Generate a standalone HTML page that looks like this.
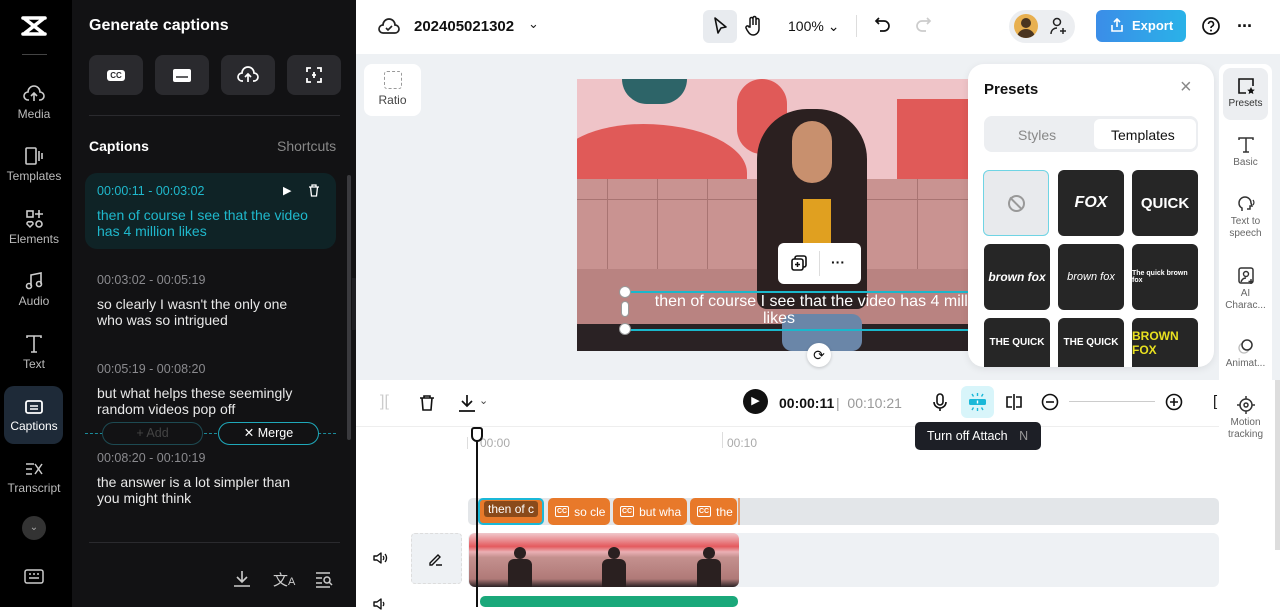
<!DOCTYPE html>
<html><head><meta charset="utf-8"><style>
*{box-sizing:border-box;margin:0;padding:0}
body{width:1280px;height:607px;overflow:hidden;position:relative;font-family:"Liberation Sans",sans-serif;background:#fff}
.a{position:absolute}
.nav{left:0;top:0;width:72px;height:607px;background:#000;color:#bbb;font-size:12px;text-align:center}
.nav .it{position:absolute;left:0;width:68px;text-align:center}
.nav svg{display:block;margin:0 auto 3px}
.panel{left:72px;top:0;width:284px;height:607px;background:#121214;color:#fff}
.gbtn{position:absolute;top:55px;width:54px;height:40px;background:#2a2a2e;border-radius:8px;display:flex;align-items:center;justify-content:center}
.cap{position:absolute;left:25px;font-size:14px;line-height:16px;color:#e8e8e8}
.cap .t{font-size:12.5px;color:#8a8a8e;margin-bottom:8px}
.tb{left:356px;top:0;width:924px;height:54px;background:#fff}
.ws{left:356px;top:54px;width:924px;height:326px;background:#eef1f4}
.tile{position:absolute;width:66px;height:66px;background:#262626;border-radius:6px;color:#fff;display:flex;align-items:center;justify-content:center;font-weight:bold}
.rs{left:1219px;top:64px;width:53px;height:392px;background:#fff;border-radius:8px;font-size:10px;color:#666;text-align:center}
.rs .i{position:absolute;left:0;width:53px}
.rs svg{display:block;margin:0 auto 2px}
.clip{position:absolute;top:498px;height:27px;background:#e8792a;border-radius:5px;color:#fff;font-size:12px;display:flex;align-items:center;padding-left:7px;overflow:hidden;white-space:nowrap}
.cc{display:inline-block;border:1.5px solid #fff;border-radius:2px;font-size:7px;padding:0 1px;margin-right:5px;line-height:9px;font-weight:bold}
.fig{position:absolute;top:8px;width:30px;height:46px}
</style></head><body>
<div class="a nav">
 <svg class="a" style="left:19px;top:14px" width="30" height="24" viewBox="0 0 30 24"><path d="M4 4h22M4 20h22M6 5l18 14M24 5L6 19" stroke="#fff" stroke-width="3.6" fill="none" stroke-linecap="round"/></svg>
 <div class="a" style="left:22px;top:54px;width:25px;height:1px;background:#444"></div>
 <div class="it" style="top:84px"><svg width="22" height="20" viewBox="0 0 22 20"><path d="M6 16H5a4 4 0 0 1 0-8 6 6 0 0 1 12 0 4 4 0 0 1 0 8h-1M11 17v-7M8 12l3-3 3 3" stroke="#ccc" stroke-width="1.6" fill="none"/></svg>Media</div>
 <div class="it" style="top:146px"><svg width="22" height="20" viewBox="0 0 22 20"><rect x="3" y="2" width="10" height="16" rx="1" stroke="#ccc" stroke-width="1.6" fill="none"/><path d="M16 5v10M19 7v6" stroke="#ccc" stroke-width="1.6"/></svg>Templates</div>
 <div class="it" style="top:209px"><svg width="22" height="20" viewBox="0 0 22 20"><rect x="4" y="2" width="6" height="6" stroke="#ccc" stroke-width="1.6" fill="none"/><path d="M16 1v8M12 5h8" stroke="#ccc" stroke-width="1.6"/><circle cx="16" cy="15" r="3" stroke="#ccc" stroke-width="1.6" fill="none"/><path d="M7 18l-3-3a2 2 0 0 1 3-2 2 2 0 0 1 3 2z" stroke="#ccc" stroke-width="1.5" fill="none"/></svg>Elements</div>
 <div class="it" style="top:271px"><svg width="22" height="20" viewBox="0 0 22 20"><path d="M8 15V4l10-2v11" stroke="#ccc" stroke-width="1.6" fill="none"/><circle cx="6" cy="15" r="2.5" stroke="#ccc" stroke-width="1.6" fill="none"/><circle cx="16" cy="13" r="2.5" stroke="#ccc" stroke-width="1.6" fill="none"/></svg>Audio</div>
 <div class="it" style="top:334px"><svg width="22" height="20" viewBox="0 0 22 20"><path d="M4 4V2h14v2M11 2v16M8 18h6" stroke="#ccc" stroke-width="1.6" fill="none"/></svg>Text</div>
 <div class="a" style="left:4px;top:386px;width:59px;height:58px;background:#1e2a38;border-radius:10px"></div>
 <div class="it" style="top:398px;color:#fff"><svg width="22" height="18" viewBox="0 0 22 18"><rect x="3" y="3" width="16" height="12" rx="2" stroke="#fff" stroke-width="1.8" fill="none"/><path d="M7 8h8M7 11h8" stroke="#fff" stroke-width="1.6"/></svg>Captions</div>
 <div class="it" style="top:460px"><svg width="22" height="18" viewBox="0 0 22 18"><path d="M3 4h8M3 9h6M3 14h6M12 4l7 10M19 4l-7 10" stroke="#ccc" stroke-width="1.5"/></svg>Transcript</div>
 <div class="a" style="left:22px;top:516px;width:24px;height:24px;border-radius:50%;background:#333;color:#aaa;font-size:10px;line-height:24px">⌄</div>
 <svg class="a" style="left:23px;top:568px" width="22" height="17" viewBox="0 0 22 17"><rect x="2" y="2" width="18" height="13" rx="2" stroke="#ccc" stroke-width="1.5" fill="none"/><path d="M6 6h2M10 6h2M14 6h2M6 10h10" stroke="#ccc" stroke-width="1.5"/></svg>
</div>
<div class="a panel">
 <div class="a" style="left:17px;top:17px;font-size:16px;font-weight:bold">Generate captions</div>
 <div class="gbtn" style="left:17px"><div style="background:#fff;color:#2a2a2e;font-size:8px;font-weight:bold;border-radius:3px;padding:1px 3px">CC</div></div>
 <div class="gbtn" style="left:83px"><svg width="18" height="13" viewBox="0 0 18 13"><rect x="0" y="0" width="18" height="13" rx="2" fill="#fff"/><path d="M3 8h12" stroke="#2a2a2e" stroke-width="1.5"/></svg></div>
 <div class="gbtn" style="left:149px"><svg width="22" height="18" viewBox="0 0 22 18"><path d="M6 15H5a4 4 0 0 1 0-8 6 6 0 0 1 12 0 4 4 0 0 1 0 8h-1M11 16V9M8 11l3-3 3 3" stroke="#fff" stroke-width="1.7" fill="none"/></svg></div>
 <div class="gbtn" style="left:215px"><svg width="18" height="18" viewBox="0 0 18 18"><path d="M2 6V2h4M12 2h4v4M2 12v4h4M16 12v4h-4M7 9h4M9 6v6" stroke="#fff" stroke-width="1.8" fill="none"/></svg></div>
 <div class="a" style="left:17px;top:115px;width:251px;height:1px;background:#2a2a2e"></div>
 <div class="a" style="left:17px;top:138px;font-size:14px;font-weight:bold">Captions</div>
 <div class="a" style="left:205px;top:138px;font-size:14px;color:#888">Shortcuts</div>
 <div class="a" style="left:13px;top:173px;width:251px;height:76px;background:#0f2326;border-radius:12px"></div>
 <div class="cap" style="top:183px;color:#1fb8cc"><div class="t" style="color:#1fb8cc">00:00:11 - 00:03:02</div>then of course I see that the video<br>has 4 million likes</div>
 <div class="a" style="left:211px;top:184px;color:#fff;font-size:11px">▶</div>
 <svg class="a" style="left:236px;top:184px" width="12" height="13" viewBox="0 0 12 13"><path d="M1 3h10M4 3V1h4v2M2.5 3l1 9h5l1-9" stroke="#fff" stroke-width="1.3" fill="none"/></svg>
 <div class="cap" style="top:272px"><div class="t">00:03:02 - 00:05:19</div>so clearly I wasn't the only one<br>who was so intrigued</div>
 <div class="cap" style="top:361px"><div class="t">00:05:19 - 00:08:20</div>but what helps these seemingly<br>random videos pop off</div>
 <div class="a" style="left:13px;top:433px;width:251px;border-top:1px dashed #1a8a9a"></div>
 <div class="a" style="left:30px;top:422px;width:101px;height:23px;border:1px solid #1d4a52;border-radius:12px;background:#121214;color:#444;font-size:12.5px;text-align:center;line-height:21px">+ Add</div>
 <div class="a" style="left:146px;top:422px;width:101px;height:23px;border:1px solid #1fa8ba;border-radius:12px;background:#121214;color:#fff;font-size:12.5px;text-align:center;line-height:21px">✕ Merge</div>
 <div class="cap" style="top:450px"><div class="t">00:08:20 - 00:10:19</div>the answer is a lot simpler than<br>you might think</div>
 <div class="a" style="left:17px;top:542px;width:251px;height:1px;background:#2a2a2e"></div>
 <svg class="a" style="left:160px;top:570px" width="20" height="18" viewBox="0 0 20 18"><path d="M10 1v11M5 7l5 5 5-5M2 16h16" stroke="#ccc" stroke-width="1.6" fill="none"/></svg>
 <div class="a" style="left:201px;top:569px;color:#ccc;font-size:15px">文<span style="font-size:11px">A</span></div>
 <svg class="a" style="left:242px;top:570px" width="20" height="18" viewBox="0 0 20 18"><path d="M2 3h14M2 8h6M2 13h6M2 17h14" stroke="#ccc" stroke-width="1.5"/><circle cx="13" cy="10" r="3" stroke="#ccc" stroke-width="1.5" fill="none"/><path d="M15 12l3 3" stroke="#ccc" stroke-width="1.5"/></svg>
 <div class="a" style="left:275px;top:175px;width:4px;height:265px;background:#3a3a3e;border-radius:2px"></div>
 <div class="a" style="left:280px;top:278px;width:8px;height:52px;background:#1e1e22;border-radius:0 6px 6px 0"></div>
</div>
<div class="a tb">
 <svg class="a" style="left:22px;top:17px" width="22" height="20" viewBox="0 0 22 20"><path d="M6 16H5a4 4 0 0 1 0-8 6 6 0 0 1 12 0 4 4 0 0 1 0 8H6z" stroke="#222" stroke-width="1.7" fill="none"/><path d="M8 11l2 2 4-4" stroke="#222" stroke-width="1.6" fill="none"/></svg>
 <div class="a" style="left:58px;top:18px;font-size:15px;font-weight:bold;color:#111">202405021302</div>
 <div class="a" style="left:172px;top:16px;font-size:13px;color:#222">⌄</div>
 <div class="a" style="left:347px;top:10px;width:34px;height:33px;background:#e8ebef;border-radius:6px"></div>
 <svg class="a" style="left:356px;top:16px" width="16" height="20" viewBox="0 0 16 20"><path d="M3 2l11 9-5 1-3 5z" stroke="#111" stroke-width="1.6" fill="none" stroke-linejoin="round"/></svg>
 <svg class="a" style="left:389px;top:15px" width="18" height="22" viewBox="0 0 18 22"><path d="M5 12V4a1.5 1.5 0 0 1 3 0v6V3a1.5 1.5 0 0 1 3 0v7V5a1.5 1.5 0 0 1 3 0v9a6 6 0 0 1-6 6c-3 0-4-2-6-5l-1-2a1.5 1.5 0 0 1 3-1z" stroke="#111" stroke-width="1.5" fill="none"/></svg>
 <div class="a" style="left:432px;top:18px;font-size:14px;color:#111">100% ⌄</div>
 <div class="a" style="left:500px;top:15px;width:1px;height:22px;background:#ddd"></div>
 <svg class="a" style="left:518px;top:16px" width="18" height="20" viewBox="0 0 18 20"><path d="M5 2L2 5l3 3M2 5h8a5 5 0 0 1 0 10H6" stroke="#111" stroke-width="1.7" fill="none"/></svg>
 <svg class="a" style="left:558px;top:16px" width="18" height="20" viewBox="0 0 18 20"><path d="M13 2l3 3-3 3M16 5H8a5 5 0 0 0 0 10h4" stroke="#ccc" stroke-width="1.7" fill="none"/></svg>
 <div class="a" style="left:653px;top:10px;width:66px;height:33px;background:#eceef1;border-radius:17px"></div>
 <div class="a" style="left:658px;top:14px;width:24px;height:24px;border-radius:50%;background:#e8b050;overflow:hidden"><div style="width:10px;height:10px;border-radius:50%;background:#4a3520;margin:4px auto 0"></div><div style="width:18px;height:10px;border-radius:9px 9px 0 0;background:#4a3520;margin:1px auto"></div></div>
 <svg class="a" style="left:694px;top:17px" width="18" height="18" viewBox="0 0 18 18"><circle cx="7" cy="5" r="3.5" stroke="#222" stroke-width="1.5" fill="none"/><path d="M1 17c0-4 3-6 6-6M13 11v6M10 14h6" stroke="#222" stroke-width="1.5" fill="none"/></svg>
 <div class="a" style="left:740px;top:10px;width:90px;height:32px;background:linear-gradient(90deg,#3b8de8,#2ab2e8);border-radius:6px;color:#fff;font-size:13px;font-weight:bold;line-height:32px;padding-left:36px">Export</div>
 <svg class="a" style="left:754px;top:18px" width="14" height="15" viewBox="0 0 14 15"><path d="M7 1v8M4 4l3-3 3 3M2 7v6h10V7" stroke="#fff" stroke-width="1.6" fill="none"/></svg>
 <svg class="a" style="left:845px;top:16px" width="20" height="20" viewBox="0 0 20 20"><circle cx="10" cy="10" r="8" stroke="#111" stroke-width="1.7" fill="none"/><path d="M7.5 8a2.5 2.5 0 1 1 3.5 2.3c-.7.3-1 .9-1 1.7" stroke="#111" stroke-width="1.6" fill="none"/><circle cx="10" cy="14.5" r="1" fill="#111"/></svg>
 <div class="a" style="left:881px;top:16px;font-size:18px;color:#111;font-weight:bold;letter-spacing:-1px">···</div>
</div>
<div class="a ws">
 <div class="a" style="left:8px;top:10px;width:57px;height:52px;background:#fff;border-radius:8px;text-align:center;font-size:12px;color:#444;padding-top:7px"><div style="width:18px;height:18px;border:1.5px dashed #999;border-radius:3px;margin:0 auto 4px"></div>Ratio</div>
 <div class="a" style="left:221px;top:25px;width:391px;height:272px;overflow:hidden;background:#e8a8b0">
  <div class="a" style="left:0;top:0;width:391px;height:120px;background:#efc4c8"></div>
  <div class="a" style="left:45px;top:0;width:65px;height:25px;background:#2d6468;border-radius:0 0 40px 40px"></div>
  <div class="a" style="left:-20px;top:45px;width:190px;height:90px;background:#e05a58;border-radius:50% 60% 0 0"></div>
  <div class="a" style="left:160px;top:0;width:50px;height:75px;background:#e05a58;border-radius:25px"></div>
  <div class="a" style="left:320px;top:20px;width:71px;height:110px;background:#e05a58"></div>
  <div class="a" style="left:0;top:100px;width:391px;height:150px;background:#c99391"></div>
  <div class="a" style="left:0;top:120px;width:391px;height:1px;background:#a87472"></div>
  <div class="a" style="left:30px;top:100px;width:1px;height:90px;background:#a87472"></div>
  <div class="a" style="left:80px;top:100px;width:1px;height:90px;background:#a87472"></div>
  <div class="a" style="left:130px;top:100px;width:1px;height:90px;background:#a87472"></div>
  <div class="a" style="left:340px;top:100px;width:1px;height:90px;background:#a87472"></div>
  <div class="a" style="left:0;top:190px;width:391px;height:55px;background:#b98381"></div>
  <div class="a" style="left:0;top:245px;width:391px;height:27px;background:#2a2224"></div>
  <div class="a" style="left:180px;top:30px;width:110px;height:200px;background:#2b2020;border-radius:50px 50px 10px 10px"></div>
  <div class="a" style="left:215px;top:42px;width:40px;height:62px;background:#c8906e;border-radius:20px"></div>
  <div class="a" style="left:226px;top:120px;width:28px;height:50px;background:#e0a020"></div>
  <div class="a" style="left:205px;top:235px;width:80px;height:37px;background:#6a86a8;border-radius:10px"></div>
  <div class="a" style="left:48px;top:212px;width:343px;height:2px;background:#1ab8cc"></div>
  <div class="a" style="left:48px;top:250px;width:343px;height:2px;background:#1ab8cc"></div>
  <div class="a" style="left:45px;top:214px;width:400px;color:#fff;font-size:16px;text-align:center;line-height:17px;white-space:nowrap">then of course I see that the video has 4 million<br><span style="margin-left:-86px">likes</span></div>
  <div class="a" style="left:42px;top:207px;width:12px;height:12px;border-radius:50%;background:#fff;border:1px solid #999"></div>
  <div class="a" style="left:42px;top:244px;width:12px;height:12px;border-radius:50%;background:#fff;border:1px solid #999"></div>
  <div class="a" style="left:44px;top:222px;width:8px;height:16px;border-radius:4px;background:#fff;border:1px solid #999"></div>
  <div class="a" style="left:201px;top:164px;width:83px;height:41px;background:#fff;border-radius:6px"></div>
  <div class="a" style="left:242px;top:172px;width:1px;height:25px;background:#ddd"></div>
  <svg class="a" style="left:213px;top:175px" width="18" height="18" viewBox="0 0 18 18"><rect x="5" y="2" width="11" height="11" rx="2" stroke="#111" stroke-width="1.6" fill="none"/><rect x="2" y="5" width="11" height="11" rx="2" stroke="#111" stroke-width="1.6" fill="#fff"/><path d="M7.5 8v5M5 10.5h5" stroke="#111" stroke-width="1.5"/></svg>
  <div class="a" style="left:254px;top:175px;font-size:14px;font-weight:bold;color:#111">···</div>
 </div>
 <div class="a" style="left:451px;top:289px;width:24px;height:24px;border-radius:50%;background:#fff;box-shadow:0 1px 3px rgba(0,0,0,.2);text-align:center;font-size:14px;line-height:24px;color:#111">⟳</div>
 <div class="a" style="left:612px;top:10px;width:246px;height:303px;background:#fff;border-radius:16px;box-shadow:0 2px 8px rgba(0,0,0,.08)">
  <div class="a" style="left:16px;top:17px;font-size:15px;font-weight:bold;color:#111">Presets</div>
  <div class="a" style="left:212px;top:12px;font-size:20px;color:#888">×</div>
  <div class="a" style="left:16px;top:52px;width:214px;height:36px;background:#eceef1;border-radius:8px"></div>
  <div class="a" style="left:126px;top:55px;width:102px;height:30px;background:#fff;border-radius:6px"></div>
  <div class="a" style="left:50px;top:63px;font-size:14px;color:#888">Styles</div>
  <div class="a" style="left:143px;top:63px;font-size:14px;color:#111">Templates</div>
  <div class="tile" style="left:15px;top:106px;background:#e8eaed;border:1.5px solid #6fd4e4"><div style="width:17px;height:17px;border:2px solid #999;border-radius:50%;position:relative"><div style="position:absolute;left:5px;top:-2px;width:2px;height:17px;background:#999;transform:rotate(-45deg)"></div></div></div>
  <div class="tile" style="left:90px;top:106px;font-style:italic;font-size:16px">FOX</div>
  <div class="tile" style="left:164px;top:106px;font-size:15px">QUICK</div>
  <div class="tile" style="left:16px;top:180px;font-style:italic;font-size:12px">brown fox</div>
  <div class="tile" style="left:90px;top:180px;font-size:11px;font-weight:normal;font-style:italic">brown fox</div>
  <div class="tile" style="left:164px;top:180px;font-size:7px">The quick brown fox</div>
  <div class="tile" style="left:16px;top:254px;font-size:10px;height:49px;border-radius:6px 6px 0 0">THE QUICK</div>
  <div class="tile" style="left:90px;top:254px;font-size:10px;height:49px;border-radius:6px 6px 0 0">THE QUICK</div>
  <div class="tile" style="left:164px;top:254px;font-size:12px;color:#e8e020;height:49px;border-radius:6px 6px 0 0">BROWN FOX</div>
 </div>
</div>
<div class="a rs">
 <div class="a" style="left:4px;top:4px;width:45px;height:52px;background:#eceef1;border-radius:8px"></div>
 <div class="i" style="top:12px;color:#333"><svg width="20" height="20" viewBox="0 0 20 20"><path d="M10 17H3V3h14v7" stroke="#111" stroke-width="1.6" fill="none"/><path d="M15 11l1.2 2.5 2.6.3-2 1.7.6 2.6-2.4-1.4-2.4 1.4.6-2.6-2-1.7 2.6-.3z" fill="#111"/></svg>Presets</div>
 <div class="i" style="top:71px"><svg width="20" height="20" viewBox="0 0 20 20"><path d="M3 5V3h14v2M10 3v14M7 17h6" stroke="#333" stroke-width="1.5" fill="none"/></svg>Basic</div>
 <div class="i" style="top:130px;line-height:12px"><svg width="20" height="20" viewBox="0 0 20 20"><path d="M6 17v-3c-2-1-3-3-3-5a6 6 0 0 1 12 0l1 3h-2v3h-3" stroke="#333" stroke-width="1.5" fill="none"/><path d="M17 6a4 4 0 0 1 0 5" stroke="#333" stroke-width="1.3" fill="none"/></svg>Text to<br>speech</div>
 <div class="i" style="top:202px;line-height:12px"><svg width="20" height="20" viewBox="0 0 20 20"><rect x="3" y="2" width="14" height="15" rx="2" stroke="#333" stroke-width="1.5" fill="none"/><circle cx="10" cy="8" r="2.5" stroke="#333" stroke-width="1.4" fill="none"/><path d="M5 16c1-3 3-4 5-4M15 13v5M12.5 15.5h5" stroke="#333" stroke-width="1.4" fill="none"/></svg>AI<br>Charac...</div>
 <div class="i" style="top:272px"><svg width="20" height="20" viewBox="0 0 20 20"><circle cx="8" cy="12" r="5" stroke="#bbb" stroke-width="1.3" fill="none"/><circle cx="11" cy="9" r="5" stroke="#333" stroke-width="1.5" fill="#fff"/></svg>Animat...</div>
 <div class="i" style="top:331px;line-height:12px"><svg width="20" height="20" viewBox="0 0 20 20"><circle cx="10" cy="10" r="6" stroke="#333" stroke-width="1.5" fill="none"/><circle cx="10" cy="10" r="2" stroke="#333" stroke-width="1.5" fill="none"/><path d="M10 1v3M10 16v3M1 10h3M16 10h3" stroke="#333" stroke-width="1.5"/></svg>Motion<br>tracking</div>
</div>
<div class="a" style="left:356px;top:380px;width:863px;height:47px;background:#fff;border-bottom:1px solid #eee"></div>
<div class="a" style="left:380px;top:393px;color:#ccc;font-size:16px">][</div>
<svg class="a" style="left:418px;top:394px" width="18" height="18" viewBox="0 0 18 18"><path d="M2 4h14M6 4V2h6v2M4 4l1 12h8l1-12" stroke="#111" stroke-width="1.6" fill="none"/></svg>
<svg class="a" style="left:457px;top:393px" width="20" height="20" viewBox="0 0 20 20"><path d="M10 2v11M5 8l5 5 5-5M2 18h16" stroke="#111" stroke-width="1.7" fill="none"/></svg>
<div class="a" style="left:479px;top:394px;font-size:11px;color:#444">⌄</div>
<div class="a" style="left:743px;top:389px;width:25px;height:25px;border-radius:50%;background:#111;color:#fff;font-size:11px;text-align:center;line-height:25px">▶</div>
<div class="a" style="left:779px;top:395px;font-size:14px;font-weight:bold;color:#111">00:00:11</div>
<div class="a" style="left:836px;top:395px;font-size:14px;color:#999">| &nbsp;00:10:21</div>
<svg class="a" style="left:932px;top:392px" width="16" height="20" viewBox="0 0 16 20"><rect x="5" y="2" width="6" height="11" rx="3" stroke="#111" stroke-width="1.6" fill="none"/><path d="M2 10a6 6 0 0 0 12 0M8 16v3" stroke="#111" stroke-width="1.6" fill="none"/></svg>
<div class="a" style="left:961px;top:386px;width:33px;height:32px;background:#d8f5fa;border-radius:6px"></div>
<svg class="a" style="left:966px;top:391px" width="23" height="22" viewBox="0 0 23 22"><rect x="3" y="8" width="17" height="6" rx="1.5" fill="#1ab8d8"/><path d="M11.5 10v2M11.5 2v3M11.5 17v3M6 3l1.5 2.5M17 3l-1.5 2.5M6 19l1.5-2.5M17 19l-1.5-2.5" stroke="#1ab8d8" stroke-width="1.4"/><path d="M11.5 9.5v3" stroke="#fff" stroke-width="1.4"/></svg>
<svg class="a" style="left:1004px;top:393px" width="20" height="18" viewBox="0 0 20 18"><path d="M10 1v16M8 4H3v10h5M12 4h5v10h-5" stroke="#111" stroke-width="1.6" fill="none"/></svg>
<svg class="a" style="left:1041px;top:393px" width="18" height="18" viewBox="0 0 18 18"><circle cx="9" cy="9" r="7.5" stroke="#111" stroke-width="1.6" fill="none"/><path d="M5 9h8" stroke="#111" stroke-width="1.6"/></svg>
<div class="a" style="left:1069px;top:401px;width:86px;height:1px;background:#ccc"></div>
<svg class="a" style="left:1165px;top:393px" width="18" height="18" viewBox="0 0 18 18"><circle cx="9" cy="9" r="7.5" stroke="#111" stroke-width="1.6" fill="none"/><path d="M5 9h8M9 5v8" stroke="#111" stroke-width="1.6"/></svg>
<div class="a" style="left:1213px;top:393px;font-size:15px;color:#111">[</div>
<div class="a" style="left:915px;top:422px;width:126px;height:28px;background:#1d1f26;border-radius:5px;color:#fff;font-size:12.5px;line-height:28px;padding-left:12px">Turn off Attach <span style="color:#999;margin-left:8px">N</span></div>
<div class="a" style="left:467px;top:437px;width:1px;height:12px;background:#ddd"></div>
<div class="a" style="left:722px;top:432px;width:1px;height:16px;background:#ddd"></div>
<div class="a" style="left:480px;top:436px;font-size:12px;color:#aaa">00:00</div>
<div class="a" style="left:727px;top:436px;font-size:12px;color:#aaa">00:10</div>
<div class="a" style="left:468px;top:498px;width:751px;height:27px;background:#e3e6e9;border-radius:5px"></div>
<div class="a" style="left:738px;top:498px;width:2px;height:27px;background:#e8a070"></div>
<div class="clip" style="left:478px;width:66px;border:2px solid #1ab8d8;padding-left:4px;align-items:flex-start"><span style="background:#8a4a1a;padding:1px 4px;border-radius:3px;margin-top:1px">then of c</span></div>
<div class="clip" style="left:548px;width:62px"><span class="cc">CC</span>so cle</div>
<div class="clip" style="left:613px;width:74px"><span class="cc">CC</span>but wha</div>
<div class="clip" style="left:690px;width:47px"><span class="cc">CC</span>the</div>
<div class="a" style="left:468px;top:533px;width:751px;height:54px;background:#eef1f4;border-radius:6px"></div>
<div class="a" style="left:469px;top:533px;width:270px;height:54px;border-radius:6px;overflow:hidden;background:linear-gradient(180deg,#f0c8cc 0,#e45a5e 25%,#eab0b4 35%,#c4908e 45%,#b07a78 85%,#2a2224 100%)">
 <div class="fig" style="left:36px"><div style="width:12px;height:12px;border-radius:6px;background:#2a2020;margin:6px auto 0"></div><div style="width:24px;height:30px;background:#2a2020;border-radius:6px 6px 0 0;margin:0 auto"></div></div>
 <div class="fig" style="left:130px"><div style="width:12px;height:12px;border-radius:6px;background:#2a2020;margin:6px auto 0"></div><div style="width:24px;height:30px;background:#2a2020;border-radius:6px 6px 0 0;margin:0 auto"></div></div>
 <div class="fig" style="left:225px"><div style="width:12px;height:12px;border-radius:6px;background:#2a2020;margin:6px auto 0"></div><div style="width:24px;height:30px;background:#2a2020;border-radius:6px 6px 0 0;margin:0 auto"></div></div>
</div>
<div class="a" style="left:411px;top:533px;width:51px;height:51px;background:#eef1f4;border:1px dashed #ddd;border-radius:4px"></div>
<svg class="a" style="left:428px;top:551px" width="16" height="16" viewBox="0 0 16 16"><path d="M2 12l8-8 2 2-8 8H2zM8 14h6" stroke="#111" stroke-width="1.4" fill="none"/></svg>
<svg class="a" style="left:372px;top:551px" width="16" height="14" viewBox="0 0 16 14"><path d="M2 5h3l4-3v10L5 9H2z" stroke="#111" stroke-width="1.4" fill="none" stroke-linejoin="round"/><path d="M11 5a3 3 0 0 1 0 4M13 3a6 6 0 0 1 0 8" stroke="#111" stroke-width="1.3" fill="none"/></svg>
<svg class="a" style="left:372px;top:597px" width="16" height="14" viewBox="0 0 16 14"><path d="M2 5h3l4-3v10L5 9H2z" stroke="#111" stroke-width="1.4" fill="none" stroke-linejoin="round"/><path d="M11 5a3 3 0 0 1 0 4" stroke="#111" stroke-width="1.3" fill="none"/></svg>
<div class="a" style="left:480px;top:596px;width:258px;height:11px;background:#1aa87a;border-radius:5px"></div>
<div class="a" style="left:476px;top:428px;width:2px;height:179px;background:#111"></div>
<div class="a" style="left:471px;top:427px;width:12px;height:15px;border:2px solid #111;border-radius:3px 3px 6px 6px;background:#fff"></div>
<div class="a" style="left:1275px;top:380px;width:5px;height:170px;background:#ddd"></div>
</body></html>
